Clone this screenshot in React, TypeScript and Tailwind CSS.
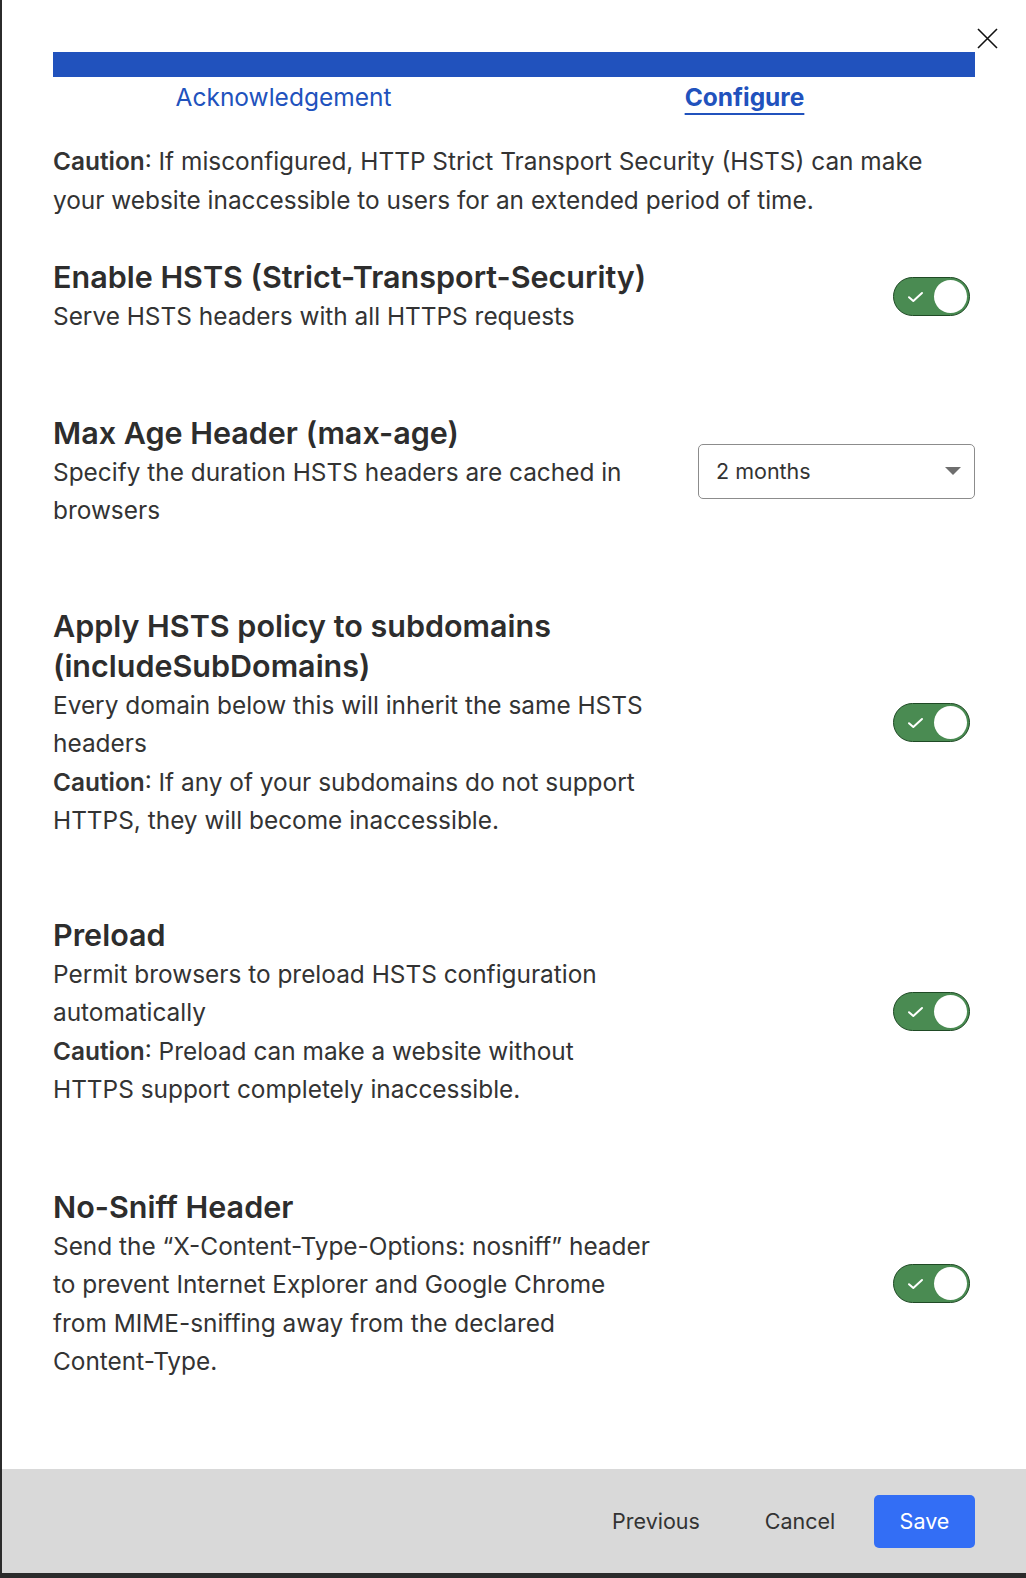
import React from 'react';

const font = { fontFamily: 'Inter, "Noto Sans", sans-serif' };

const Toggle: React.FC = () => (
  <button
    type="button"
    aria-pressed="true"
    className="relative mr-[5px] flex h-[39px] w-[77px] shrink-0 items-center rounded-full border border-[#1f4a25] bg-[#4a8b52]"
  >
    <svg className="absolute left-[13px] top-[13px]" width="17" height="12" viewBox="0 0 17 12" fill="none">
      <path d="M2 6.2 L6.3 10 L15 2" stroke="white" strokeWidth="2" strokeLinecap="round" strokeLinejoin="round" />
    </svg>
    <span className="absolute right-[2px] top-[2px] h-[33px] w-[33px] rounded-full bg-white" />
  </button>
);

const Row: React.FC<{ title: string; children: React.ReactNode; control: React.ReactNode; className?: string }> = ({
  title,
  children,
  control,
  className,
}) => (
  <div className={`flex items-center justify-between ${className ?? ''}`}>
    <div className="w-[605px]">
      <h3 className="text-[30.5px] font-semibold leading-[40px] text-[#2d2d2d]">{title}</h3>
      <div className="text-[24.4px] leading-[38.5px] text-[#333]">{children}</div>
    </div>
    {control}
  </div>
);

export default function App() {
  return (
    <div className="min-h-[1578px] bg-[#2b2b2b]" style={font}>
      <div className="relative ml-[2px] flex h-[1573px] flex-col bg-white">
        <button type="button" aria-label="Close" className="absolute right-[28px] top-[28px]">
          <svg width="21" height="21" viewBox="0 0 21 21" fill="none">
            <path d="M1 1 L20 20 M20 1 L1 20" stroke="#111" strokeWidth="1.6" />
          </svg>
        </button>

        <div className="flex-1 px-[51px] pt-[52px]">
          <div className="h-[25px] bg-[#2152bd]" />
          <div className="mt-[5px] grid grid-cols-2 text-[24.5px] leading-[30px] text-[#2152bd]">
            <div className="text-center">Acknowledgement</div>
            <div className="text-center">
              <span className="font-bold underline decoration-2 underline-offset-[7px]">Configure</span>
            </div>
          </div>

          <p className="mt-[30px] text-[24.4px] leading-[38.5px] text-[#333]">
            <b className="font-semibold">Caution</b>: If misconfigured, HTTP Strict Transport Security (HSTS) can make
            your website inaccessible to users for an extended period of time.
          </p>

          <div className="mt-[38px] flex flex-col">
            <Row title="Enable HSTS (Strict-Transport-Security)" control={<Toggle />}>
              Serve HSTS headers with all HTTPS requests
            </Row>

            <Row
              className="mt-[77px]"
              title="Max Age Header (max-age)"
              control={
                <div className="flex h-[55px] w-[277px] items-center justify-between rounded-[5px] border border-[#8c8c8c] pl-[17px] pr-[13px] text-[21.5px] text-[#333]">
                  <span>2 months</span>
                  <svg width="16" height="8" viewBox="0 0 16 8">
                    <path d="M0 0 H16 L8 8 Z" fill="#6e6e6e" />
                  </svg>
                </div>
              }
            >
              Specify the duration HSTS headers are cached in browsers
            </Row>

            <Row
              className="mt-[76px]"
              title="Apply HSTS policy to subdomains (includeSubDomains)"
              control={<Toggle />}
            >
              <p>Every domain below this will inherit the same HSTS headers</p>
              <p>
                <b className="font-semibold">Caution</b>: If any of your subdomains do not support HTTPS, they will
                become inaccessible.
              </p>
            </Row>

            <Row className="mt-[75px]" title="Preload" control={<Toggle />}>
              <p>Permit browsers to preload HSTS configuration automatically</p>
              <p>
                <b className="font-semibold">Caution</b>: Preload can make a website without HTTPS support completely
                inaccessible.
              </p>
            </Row>

            <Row className="mt-[78px]" title="No-Sniff Header" control={<Toggle />}>
              Send the “X-Content-Type-Options: nosniff” header to prevent Internet Explorer and Google Chrome from
              MIME-sniffing away from the declared Content-Type.
            </Row>
          </div>
        </div>

        <div className="flex h-[104px] items-center justify-end bg-[#d9d9d9] px-[51px] text-[21.5px]">
          <button type="button" className="w-[126px] text-center text-[#333]">
            Previous
          </button>
          <button type="button" className="ml-[26px] w-[110px] text-center text-[#333]">
            Cancel
          </button>
          <button
            type="button"
            className="ml-[19px] h-[53px] w-[101px] rounded-[5px] bg-[#336ef5] text-center text-white"
          >
            Save
          </button>
        </div>
      </div>
    </div>
  );
}
